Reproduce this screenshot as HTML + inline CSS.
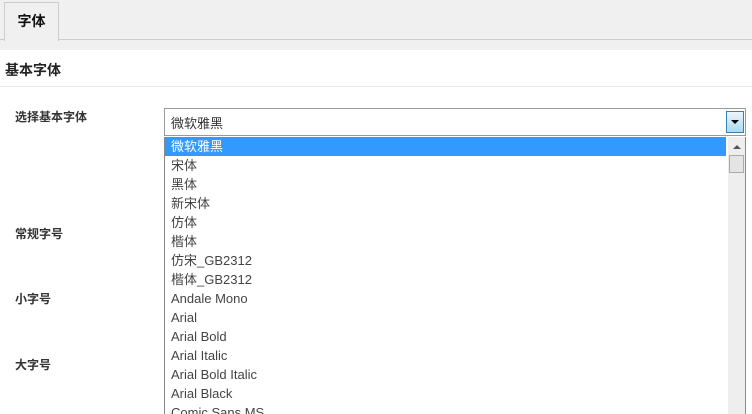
<!DOCTYPE html>
<html style="overflow:hidden;height:414px"><head><meta charset="utf-8"><style>
body{margin:0;width:752px;height:414px;overflow:hidden;background:#fff;font-family:"Liberation Sans","Noto Sans CJK SC",sans-serif;position:relative}
.top{position:absolute;left:0;top:0;width:752px;height:50px;background:#f0f0f0}
.line{position:absolute;left:0;top:39px;width:752px;height:1px;background:#ccc}
.tab{position:absolute;left:4px;top:2px;width:53px;height:38px;border:1px solid #ccc;border-bottom:none;background:#f0f0f0;font-size:14px;font-weight:bold;color:#111;text-align:center;line-height:36px}
.h{position:absolute;left:5px;top:60px;font-size:14px;font-weight:bold;color:#222}
.sep{position:absolute;left:0;top:86px;width:752px;height:1px;background:#e8e8e8}
.lab{position:absolute;left:15px;font-size:12px;font-weight:bold;color:#333}
.sel{position:absolute;left:164px;top:108px;width:580px;height:26px;border:1px solid #999;background:#fff;font-size:13px;color:#333;line-height:29px;text-indent:6px}
.btn{position:absolute;right:1px;top:2px;width:16px;height:20px;border:1px solid #3c7fb1;background:linear-gradient(#eaf6fd,#a7d9f5)}
.btn:after{content:"";position:absolute;left:4px;top:8px;border-left:4px solid transparent;border-right:4px solid transparent;border-top:4px solid #000}
.list{position:absolute;left:164px;top:137px;width:580px;height:290px;border:1px solid #888;border-top:none;background:#fff}
.it{height:19px;line-height:20px;font-size:13px;color:#444;padding-left:6px;width:555px}
.it.a{background:#3399ff;color:#fff}
.sb{position:absolute;right:0;top:0;width:17px;height:290px;background:#eee}
.sb .up{position:absolute;left:5px;top:8px;border-left:4px solid transparent;border-right:4px solid transparent;border-bottom:4px solid #555}
.sb .th{position:absolute;left:1px;top:18px;width:13px;height:16px;border:1px solid #aaa;background:#e4e4e4}
</style></head><body>
<div class="top"></div><div class="line"></div>
<div class="tab">字体</div>
<div class="h">基本字体</div>
<div class="sep"></div>
<div class="lab" style="top:108px">选择基本字体</div>
<div class="lab" style="top:225px">常规字号</div>
<div class="lab" style="top:290px">小字号</div>
<div class="lab" style="top:356px">大字号</div>
<div class="sel">微软雅黑<div class="btn"></div></div>
<div class="list">
<div class="it a">微软雅黑</div><div class="it">宋体</div><div class="it">黑体</div><div class="it">新宋体</div><div class="it">仿体</div><div class="it">楷体</div><div class="it">仿宋_GB2312</div><div class="it">楷体_GB2312</div><div class="it">Andale Mono</div><div class="it">Arial</div><div class="it">Arial Bold</div><div class="it">Arial Italic</div><div class="it">Arial Bold Italic</div><div class="it">Arial Black</div><div class="it">Comic Sans MS</div>
<div class="sb"><div class="up"></div><div class="th"></div></div>
</div>
</body></html>
